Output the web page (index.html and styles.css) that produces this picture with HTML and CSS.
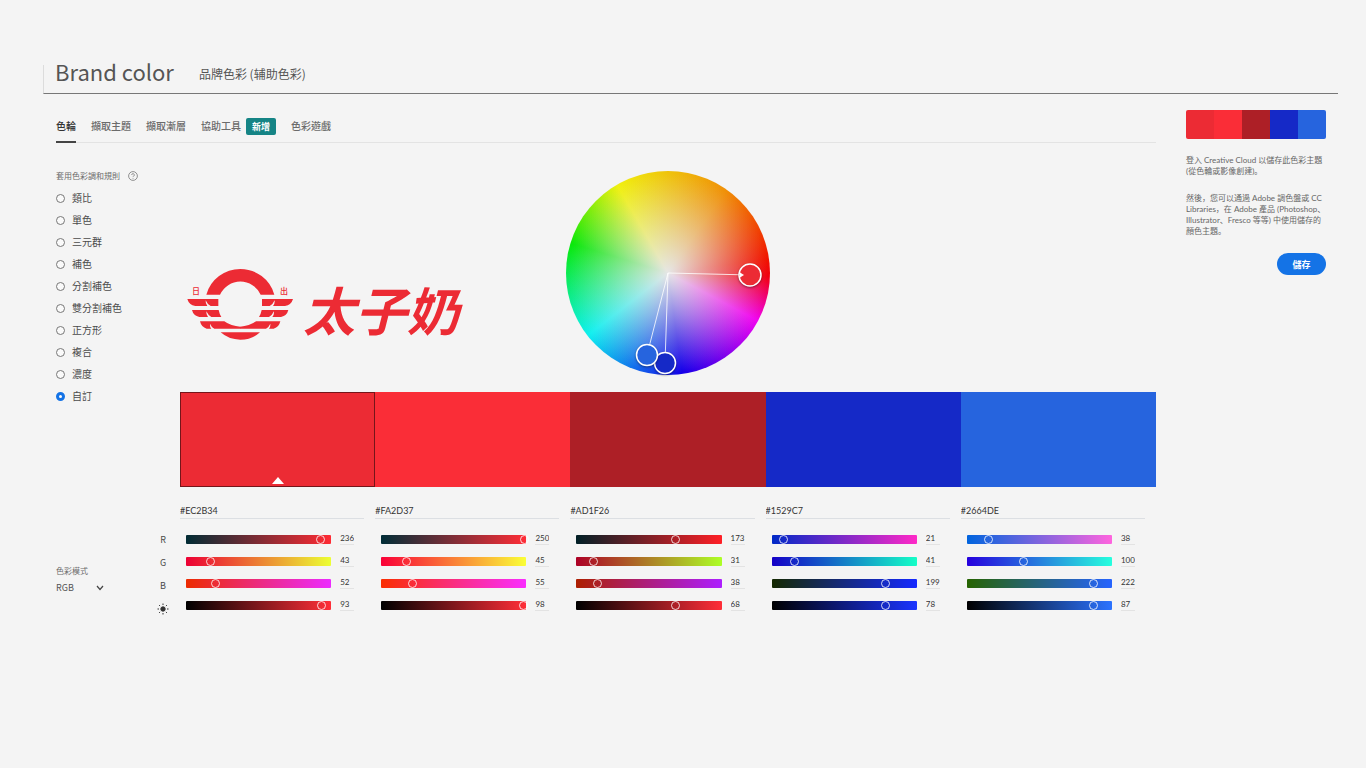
FILE: index.html
```html
<!DOCTYPE html>
<html lang="zh-Hant">
<head>
<meta charset="utf-8">
<meta name="viewport" content="width=device-width, initial-scale=1">
<title>Brand color</title>
<link rel="stylesheet" href="styles.css">
</head>
<body>
<header class="page-head">
  <h1 class="page-title">Brand color</h1>
  <p class="page-subtitle" lang="zh-Hans">品牌色彩 (辅助色彩)</p>
</header>

<div class="layout">
  <main class="main">
    <nav class="tabs">
      <a class="tab tab-active" href="#wheel">色輪</a>
      <a class="tab" href="#theme">擷取主題</a>
      <a class="tab" href="#gradient">擷取漸層</a>
      <a class="tab tab-with-badge" href="#tools">協助工具<span class="badge">新增</span></a>
      <a class="tab" href="#games">色彩遊戲</a>
    </nav>

    <div class="workspace">
      <fieldset class="rules">
        <legend class="rules-title">套用色彩調和規則
          <svg class="help" viewBox="0 0 10 10" aria-hidden="true"><circle cx="5" cy="5" r="4.4"/><path d="M3.7 4a1.3 1.3 0 1 1 1.9 1.1q-.6.3-.6 1M5 7v.7"/></svg>
        </legend>
        <label class="rule"><input type="radio" name="rule">類比</label>
        <label class="rule"><input type="radio" name="rule">單色</label>
        <label class="rule"><input type="radio" name="rule">三元群</label>
        <label class="rule"><input type="radio" name="rule">補色</label>
        <label class="rule"><input type="radio" name="rule">分割補色</label>
        <label class="rule"><input type="radio" name="rule">雙分割補色</label>
        <label class="rule"><input type="radio" name="rule">正方形</label>
        <label class="rule"><input type="radio" name="rule">複合</label>
        <label class="rule"><input type="radio" name="rule">濃度</label>
        <label class="rule"><input type="radio" name="rule" checked>自訂</label>
      </fieldset>

      <section class="visual">
        <div class="stage">
          <div class="brand">
            <div class="emblem">
              <svg class="emblem-art" viewBox="21 25 318 216" aria-hidden="true">
                <path d="M79 105A106 106 0 0 1 283 105H242A67 67 0 0 0 120 105Z"/>
                <path id="wing" d="M22 118H115V139H92Q82 134 77 122Q76 132 82 139H46Q27 136 22 118ZM36 151H116Q118 162 124 172H94Q84 166 79 155Q78 165 84 172H58Q40 168 36 151ZM60 185H133Q153 200 181 201V207H103Q94 202 90 192Q89 201 94 207H80Q64 203 60 185Z"/>
                <use href="#wing" transform="matrix(-1 0 0 1 361 0)"/>
                <path d="M122 218H240Q216 240 181 240T122 218Z"/>
              </svg>
              <span class="emblem-char emblem-left">日</span>
              <span class="emblem-char emblem-right">出</span>
            </div>
            <span class="wordmark">太子奶</span>
          </div>
          <div class="wheel">
            <svg class="wheel-handles" viewBox="0 0 204 204" aria-hidden="true">
              <path class="spoke" d="M102 102L184 104M102 102L99 192M102 102L81 184"/>
              <circle class="handle" cx="99" cy="192" r="10.5" fill="#1529c7"/>
              <circle class="handle" cx="81" cy="184" r="10.5" fill="#2664de"/>
              <circle class="handle" cx="184" cy="104" r="11" fill="#ec2b34"/>
              <path d="M174 101.500l4 2.500-4 2.500z" fill="#fff"/>
            </svg>
          </div>
        </div>
        <div class="palette">
          <button class="swatch swatch-selected" style="--c:#ec2b34" aria-label="#EC2B34"></button>
          <button class="swatch" style="--c:#fa2d37" aria-label="#FA2D37"></button>
          <button class="swatch" style="--c:#ad1f26" aria-label="#AD1F26"></button>
          <button class="swatch" style="--c:#1529c7" aria-label="#1529C7"></button>
          <button class="swatch" style="--c:#2664de" aria-label="#2664DE"></button>
        </div>
      </section>

      <div class="controls">
        <div class="mode">
          <label class="mode-label" for="mode">色彩模式</label>
          <div class="mode-box">
            <select id="mode" class="mode-select"><option>RGB</option></select>
            <svg class="chevron" viewBox="0 0 8 6" aria-hidden="true"><path d="M1 1l3 3.500L7 1"/></svg>
          </div>
        </div>
        <div class="channels">
          <span>R</span><span>G</span><span>B</span>
          <svg class="sun" viewBox="0 0 12 12" aria-hidden="true"><circle cx="6" cy="6" r="2.200"/><path d="M6 .5v1.500M6 10v1.500M.5 6H2M10 6h1.500M2.100 2.100l1 1M8.900 8.900l1 1M2.100 9.900l1-1M8.900 3.100l1-1"/></svg>
        </div>
      </div>

      <section class="colors">
        <div class="color">
          <input class="hex" value="#EC2B34" aria-label="色碼 1">
          <div class="row"><div class="track" style="--a:#002b34;--b:#ff2b34"><input type="range" max="255" value="236" aria-label="R"></div><input class="num" value="236" aria-label="R"></div>
          <div class="row"><div class="track" style="--a:#ec0034;--b:#ecff34"><input type="range" max="255" value="43" aria-label="G"></div><input class="num" value="43" aria-label="G"></div>
          <div class="row"><div class="track" style="--a:#ec2b00;--b:#ec2bff"><input type="range" max="255" value="52" aria-label="B"></div><input class="num" value="52" aria-label="B"></div>
          <div class="row"><div class="track" style="--a:#000;--b:#ff2f38"><input type="range" max="100" value="93" aria-label="亮度"></div><input class="num" value="93" aria-label="亮度"></div>
        </div>
        <div class="color">
          <input class="hex" value="#FA2D37" aria-label="色碼 2">
          <div class="row"><div class="track" style="--a:#002d37;--b:#ff2d37"><input type="range" max="255" value="250" aria-label="R"></div><input class="num" value="250" aria-label="R"></div>
          <div class="row"><div class="track" style="--a:#fa0037;--b:#faff37"><input type="range" max="255" value="45" aria-label="G"></div><input class="num" value="45" aria-label="G"></div>
          <div class="row"><div class="track" style="--a:#fa2d00;--b:#fa2dff"><input type="range" max="255" value="55" aria-label="B"></div><input class="num" value="55" aria-label="B"></div>
          <div class="row"><div class="track" style="--a:#000;--b:#ff2e38"><input type="range" max="100" value="98" aria-label="亮度"></div><input class="num" value="98" aria-label="亮度"></div>
        </div>
        <div class="color">
          <input class="hex" value="#AD1F26" aria-label="色碼 3">
          <div class="row"><div class="track" style="--a:#001f26;--b:#ff1f26"><input type="range" max="255" value="173" aria-label="R"></div><input class="num" value="173" aria-label="R"></div>
          <div class="row"><div class="track" style="--a:#ad0026;--b:#adff26"><input type="range" max="255" value="31" aria-label="G"></div><input class="num" value="31" aria-label="G"></div>
          <div class="row"><div class="track" style="--a:#ad1f00;--b:#ad1fff"><input type="range" max="255" value="38" aria-label="B"></div><input class="num" value="38" aria-label="B"></div>
          <div class="row"><div class="track" style="--a:#000;--b:#ff2e38"><input type="range" max="100" value="68" aria-label="亮度"></div><input class="num" value="68" aria-label="亮度"></div>
        </div>
        <div class="color">
          <input class="hex" value="#1529C7" aria-label="色碼 4">
          <div class="row"><div class="track" style="--a:#0029c7;--b:#ff29c7"><input type="range" max="255" value="21" aria-label="R"></div><input class="num" value="21" aria-label="R"></div>
          <div class="row"><div class="track" style="--a:#1500c7;--b:#15ffc7"><input type="range" max="255" value="41" aria-label="G"></div><input class="num" value="41" aria-label="G"></div>
          <div class="row"><div class="track" style="--a:#152900;--b:#1529ff"><input type="range" max="255" value="199" aria-label="B"></div><input class="num" value="199" aria-label="B"></div>
          <div class="row"><div class="track" style="--a:#000;--b:#1b35ff"><input type="range" max="100" value="78" aria-label="亮度"></div><input class="num" value="78" aria-label="亮度"></div>
        </div>
        <div class="color">
          <input class="hex" value="#2664DE" aria-label="色碼 5">
          <div class="row"><div class="track" style="--a:#0064de;--b:#ff64de"><input type="range" max="255" value="38" aria-label="R"></div><input class="num" value="38" aria-label="R"></div>
          <div class="row"><div class="track" style="--a:#2600de;--b:#26ffde"><input type="range" max="255" value="100" aria-label="G"></div><input class="num" value="100" aria-label="G"></div>
          <div class="row"><div class="track" style="--a:#266400;--b:#2664ff"><input type="range" max="255" value="222" aria-label="B"></div><input class="num" value="222" aria-label="B"></div>
          <div class="row"><div class="track" style="--a:#000;--b:#2c73ff"><input type="range" max="100" value="87" aria-label="亮度"></div><input class="num" value="87" aria-label="亮度"></div>
        </div>
      </section>
    </div>
  </main>

  <aside class="side">
    <div class="mini">
      <span class="mini-1"></span><span class="mini-2"></span><span class="mini-3"></span><span class="mini-4"></span><span class="mini-5"></span>
    </div>
    <p lang="zh-Hans">登入 Creative Cloud 以儲存此色彩主題<br>(從色輪或影像創建)。</p>
    <p lang="zh-Hans">然後，您可以通過 Adobe 調色盤或 CC<br>Libraries，在 Adobe 產品 (Photoshop、<br>Illustrator、Fresco 等等) 中使用儲存的<br>顏色主題。</p>
    <button class="save">儲存</button>
  </aside>
</div>
</body>
</html>
```
FILE: styles.css
```css
* { box-sizing: border-box; }

body {
  margin: 0;
  background: #f4f4f4;
  color: #4b4b4b;
  font-family: "Noto Sans CJK TC", "Noto Sans", sans-serif;
  font-size: 9px;
}

input, select, button { font: inherit; color: inherit; }

.page-head {
  display: flex;
  align-items: flex-end;
  gap: 25px;
  height: 29px;
  margin: 65px 28px 0 43px;
  padding: 0 11px 7px;
  border-left: 1px solid #dcdcdc;
  border-bottom: 1px solid #777;
}
.page-title {
  margin: 0;
  color: #555;
  font-size: 22px;
  line-height: 30px;
  font-weight: 400;
}
.page-subtitle {
  margin: 0;
  color: #555;
  font-family: "Noto Sans CJK SC", sans-serif;
  font-size: 12px;
  line-height: 24px;
}

.layout {
  display: grid;
  grid-template-columns: 1fr 140px;
  gap: 30px;
  padding: 16px 40px 0 56px;
}

.tabs {
  display: flex;
  gap: 15px;
  height: 33px;
  border-bottom: 1px solid #e3e3e3;
  font-size: 10px;
}
.tab {
  height: 33px;
  color: #6b6b6b;
  font-weight: 500;
  line-height: 32px;
  text-decoration: none;
}
.tab-active {
  border-bottom: 2px solid #444;
  color: #333;
}
.tab-with-badge { display: flex; align-items: flex-start; gap: 5px; }
.badge {
  height: 17px;
  margin-top: 8px;
  padding: 0 6px;
  border-radius: 2px;
  background: #158485;
  color: #fff;
  font-size: 9px;
  font-weight: 700;
  line-height: 17px;
}

.workspace {
  display: grid;
  grid-template-columns: 124px 1fr;
}

.rules {
  min-width: 0;
  margin: 0;
  padding: 4px 0 0;
  border: 0;
  font-size: 10px;
}
.rules-title {
  display: flex;
  align-items: center;
  gap: 8px;
  padding: 26px 0 0;
  color: #6b6b6b;
  font-size: 8px;
  line-height: 14px;
}
.help { width: 10px; height: 10px; fill: none; stroke: #777; stroke-width: 0.8; }
.rule {
  display: flex;
  align-items: center;
  gap: 7px;
  height: 22px;
  line-height: 22px;
}
.rule input {
  appearance: none;
  width: 9px;
  height: 9px;
  margin: 0;
  border: 1px solid #777;
  border-radius: 50%;
  background: #fafafa;
}
.rule input:checked { border: 3px solid #1473e6; }

.stage {
  display: grid;
  grid-template-columns: 1fr 204px 1fr;
  padding: 28px 0 17px;
}
.brand {
  display: flex;
  align-items: flex-start;
  gap: 10px;
  padding: 97px 0 0 7px;
  color: #ec2b34;
}
.emblem { position: relative; flex: none; width: 106px; }
.emblem-art { display: block; width: 106px; height: 72px; fill: #ec2b34; }
.emblem-char { position: absolute; top: 18px; font-size: 8px; line-height: 10px; font-weight: 500; }
.emblem-left { left: 5px; }
.emblem-right { right: 5px; }
.wordmark {
  padding-top: 15px;
  font-size: 52px;
  font-style: italic;
  font-weight: 700;
  line-height: 52px;
  white-space: nowrap;
}

.wheel {
  height: 204px;
  border-radius: 50%;
  background:
    radial-gradient(circle closest-side, #e6e6e6 0%, rgba(230, 230, 230, 0.55) 45%, rgba(230, 230, 230, 0) 98%),
    conic-gradient(#efc30c 0deg, #f09008 35deg, #f01400 82deg, #f00010 92deg, #f005f0 118deg, #1400e8 172deg, #10f0f0 232deg, #0ae80a 287deg, #f0f010 330deg, #efc30c 360deg);
}
.wheel-handles { display: block; overflow: visible; }
.spoke { fill: none; stroke: #fff; stroke-width: 1; opacity: 0.8; }
.handle { stroke: #fff; stroke-width: 1.5; filter: drop-shadow(0 1px 1px rgba(0, 0, 0, 0.4)); }

.palette { display: grid; grid-template-columns: repeat(5, 1fr); height: 95px; }
.swatch { border: 0; padding: 0; border-radius: 0; background: var(--c); }
.swatch-selected {
  display: flex;
  align-items: flex-end;
  justify-content: center;
  padding-bottom: 2px;
  border: 1px solid #75151a;
}
.swatch-selected::after {
  content: "";
  border: 6px solid transparent;
  border-top: 0;
  border-bottom: 7px solid #fff;
}

.controls { display: flex; justify-content: space-between; padding: 41px 11px 0 0; }
.mode { padding-top: 35px; color: #555; }
.mode-label { display: block; font-size: 8px; line-height: 16px; color: #6b6b6b; }
.mode-box { position: relative; width: 48px; }
.mode-select {
  appearance: none;
  width: 48px;
  height: 18px;
  padding: 0;
  border: 0;
  background: none;
  line-height: 18px;
}
.chevron {
  position: absolute;
  top: 6px;
  right: 0;
  width: 8px;
  height: 6px;
  fill: none;
  stroke: #444;
  stroke-width: 1.2;
  pointer-events: none;
}
.channels { display: grid; grid-auto-rows: 23px; justify-items: center; align-content: start; align-items: center; width: 12px; }
.sun { width: 12px; height: 12px; fill: #333; stroke: #333; stroke-width: 1; }

.colors { display: grid; grid-template-columns: repeat(5, 1fr); padding-top: 16px; }
.hex {
  display: block;
  width: calc(100% - 11px);
  height: 16px;
  margin-bottom: 9px;
  padding: 0;
  border: 0;
  border-bottom: 1px solid #dcdfe3;
  background: none;
  color: #333;
  font-family: Lato, sans-serif;
}
.row { display: flex; align-items: center; gap: 9px; height: 22px; padding: 0 21px 0 6px; }
.track {
  flex: 1;
  height: 9px;
  border-radius: 1px;
  background: linear-gradient(90deg, var(--a), var(--b));
}
.track input {
  appearance: none;
  display: block;
  width: calc(100% + 10px);
  height: 9px;
  margin: 0 -5px;
  background: none;
}
.track input::-webkit-slider-thumb {
  appearance: none;
  width: 9px;
  height: 9px;
  border: 1px solid rgba(255, 255, 255, 0.8);
  border-radius: 50%;
  background: none;
}
.num {
  width: 14px;
  height: 13px;
  margin-bottom: 2px;
  padding: 0;
  border: 0;
  border-bottom: 1px solid #e3e3e3;
  background: none;
  color: #333;
  font-family: Lato, sans-serif;
  font-size: 8px;
}

.side {
  color: #666;
  font-family: Lato, "Noto Sans CJK SC", sans-serif;
  font-size: 8px;
  line-height: 11px;
}
.mini { display: grid; grid-template-columns: repeat(5, 1fr); height: 29px; margin-bottom: 16px; border-radius: 2px; overflow: hidden; }
.mini-1 { background: #ec2b34; }
.mini-2 { background: #fa2d37; }
.mini-3 { background: #ad1f26; }
.mini-4 { background: #1529c7; }
.mini-5 { background: #2664de; }
.side p { margin: 0 0 16px; white-space: nowrap; }
.save {
  display: block;
  width: 49px;
  height: 22px;
  margin-left: auto;
  padding: 0;
  border: 0;
  border-radius: 11px;
  background: #1473e6;
  color: #fff;
  font-size: 9px;
  font-weight: 700;
}
```
